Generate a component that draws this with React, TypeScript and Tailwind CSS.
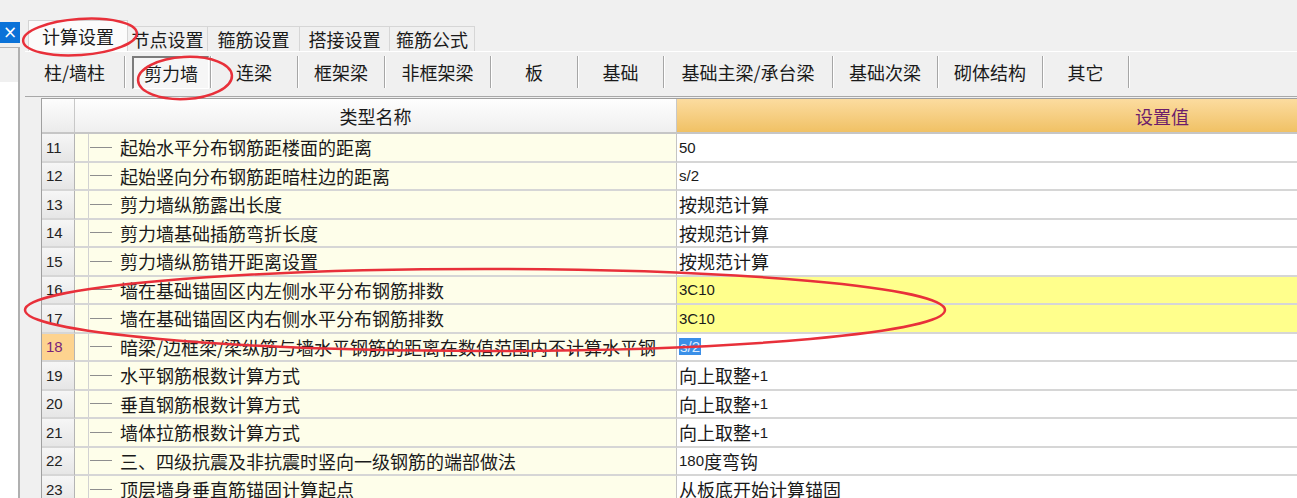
import React from "react";

type Row = { n: number; name: string; value: string; kind?: "yellow" | "selected" };

const rows: Row[] = [
  { n: 11, name: "起始水平分布钢筋距楼面的距离", value: "50" },
  { n: 12, name: "起始竖向分布钢筋距暗柱边的距离", value: "s/2" },
  { n: 13, name: "剪力墙纵筋露出长度", value: "按规范计算" },
  { n: 14, name: "剪力墙基础插筋弯折长度", value: "按规范计算" },
  { n: 15, name: "剪力墙纵筋错开距离设置", value: "按规范计算" },
  { n: 16, name: "墙在基础锚固区内左侧水平分布钢筋排数", value: "3C10", kind: "yellow" },
  { n: 17, name: "墙在基础锚固区内右侧水平分布钢筋排数", value: "3C10", kind: "yellow" },
  { n: 18, name: "暗梁/边框梁/梁纵筋与墙水平钢筋的距离在数值范围内不计算水平钢", value: "s/2", kind: "selected" },
  { n: 19, name: "水平钢筋根数计算方式", value: "向上取整+1" },
  { n: 20, name: "垂直钢筋根数计算方式", value: "向上取整+1" },
  { n: 21, name: "墙体拉筋根数计算方式", value: "向上取整+1" },
  { n: 22, name: "三、四级抗震及非抗震时竖向一级钢筋的端部做法", value: "180度弯钩" },
  { n: 23, name: "顶层墙身垂直筋锚固计算起点", value: "从板底开始计算锚固" },
];

const topTabs = [
  { label: "节点设置", w: "w-[80px]" },
  { label: "箍筋设置", w: "w-[92px]" },
  { label: "搭接设置", w: "w-[90px]" },
  { label: "箍筋公式", w: "w-[85px]" },
];

const subTabs = [
  { label: "柱/墙柱", w: "w-[100px]" },
  { label: "剪力墙", w: "w-[86px]", pressed: true },
  { label: "连梁", w: "w-[87px]" },
  { label: "框架梁", w: "w-[87px]" },
  { label: "非框架梁", w: "w-[106px]" },
  { label: "板", w: "w-[87px]" },
  { label: "基础", w: "w-[86px]" },
  { label: "基础主梁/承台梁", w: "w-[169px]" },
  { label: "基础次梁", w: "w-[105px]" },
  { label: "砌体结构", w: "w-[105px]" },
  { label: "其它", w: "w-[86px]" },
];

function Mixed({ text }: { text: string }) {
  const parts = text.match(/[\x20-\x7e]+|[^\x20-\x7e]+/g) || [];
  return (
    <>
      {parts.map((p, i) =>
        /^[\x20-\x7e]+$/.test(p) ? (
          <span key={i} className="font-['Liberation_Sans',sans-serif] text-[15px]">
            {p}
          </span>
        ) : (
          <span key={i} className="text-[18px]">
            {p}
          </span>
        )
      )}
    </>
  );
}

export default function App() {
  return (
    <div className="relative w-[1297px] h-[498px] overflow-hidden bg-[#f0f0f0] text-[#1a1a1a] font-['Noto_Sans_CJK_SC','Noto_Sans',sans-serif]">
      <div className="flex h-full">
        {/* left sidebar */}
        <div className="w-[20px] shrink-0 flex flex-col">
          <div className="h-[22px]" />
          <div className="h-[21px] bg-[#0a72d8] flex items-center justify-center text-white text-[17px] leading-none font-['DejaVu_Sans',sans-serif]">
            ×
          </div>
          <div className="h-[4px]" />
          <div className="h-[35px] border-t border-[#b4b4b4] border-r-2 border-r-[#b0b0b0]" />
          <div className="flex-1 bg-white border-r-2 border-[#b0b0b0]" />
        </div>

        {/* main */}
        <div className="flex-1 min-w-0 flex flex-col pt-[20px]">
          {/* top tabs */}
          <div className="flex items-end h-[31px] ml-[8px]">
            <div className="w-[100px] h-[31px] bg-[#fbfbfb] border border-b-0 border-[#d4d4d4] flex items-center justify-center text-[18px] leading-none pb-[1px]">
              计算设置
            </div>
            {topTabs.map((t) => (
              <div
                key={t.label}
                className={`${t.w} h-[25px] border-t border-r border-[#d6d6d6] bg-[#f0f0f0] flex items-center justify-center text-[18px] leading-none pb-[1px]`}
              >
                {t.label}
              </div>
            ))}
          </div>

          {/* tab page */}
          <div className="flex-1 flex flex-col min-h-0">
            {/* sub tabs */}
            <div className="h-[46px] ml-[5px] border-t border-white border-b border-b-[#a8a8a8] pt-[4px] flex items-start">
              {subTabs.map((s) => (
                <div
                  key={s.label}
                  className={`${s.w} h-[32px] shrink-0 flex items-center border-r border-[#a6a6a6] shadow-[1px_0_0_#ffffff] text-[18px] leading-none`}
                >
                  {s.pressed ? (
                    <div className="ml-[7px] w-[77px] h-[33px] border-l-2 border-t-2 border-[#7c7c7c] border-r border-b border-r-white border-b-white bg-[#f6f6f6] flex items-center justify-center">
                      {s.label}
                    </div>
                  ) : (
                    <div className="w-full text-center">{s.label}</div>
                  )}
                </div>
              ))}
            </div>

            {/* table */}
            <div className="mt-[1px] ml-[21px] flex-1 overflow-hidden border-l border-t border-[#a0a0a0] bg-white">
              <div className="w-[1610px]">
                {/* header */}
                <div className="flex h-[35px] border-b-2 border-[#c6c6c6]">
                  <div className="w-[33px] shrink-0 border-r border-[#c8c8c8] bg-gradient-to-b from-[#fdfdfd] to-[#ebebeb]" />
                  <div className="w-[602px] shrink-0 border-r border-[#c8c8c8] bg-gradient-to-b from-[#fefefe] to-[#efefef] flex items-center justify-center text-[18px] leading-none">
                    类型名称
                  </div>
                  <div className="w-[970px] shrink-0 bg-gradient-to-b from-[#fcdc9f] to-[#f0c164] flex items-center justify-center text-[18px] leading-none text-[#6b1d6b]">
                    设置值
                  </div>
                </div>

                {rows.map((r) => (
                  <div key={r.n} className="flex h-[28.5px]">
                    <div
                      className={`w-[33px] shrink-0 border-r border-b-2 border-r-[#b4b4b4] border-b-[#d6d6d6] flex items-center pl-[4px] font-['Liberation_Sans',sans-serif] text-[15px] leading-none ${
                        r.kind === "selected"
                          ? "bg-[#fdd38f] text-[#7a1f7a]"
                          : "bg-gradient-to-b from-[#f6f6f6] to-[#e6e6e6] text-[#222222]"
                      }`}
                    >
                      {r.n}
                    </div>
                    <div className="w-[602px] shrink-0 border-r border-r-[#c4c4c4] border-b-2 border-b-[#d6d6d6] bg-[#fefeea] flex items-stretch overflow-hidden">
                      <div className="w-[13px] shrink-0" />
                      <div className="w-px shrink-0 bg-[#d2d2d2]" />
                      <div className="flex items-center">
                        <div className="ml-[1px] w-[22px] h-px bg-[#8e8e8e]" />
                      </div>
                      <div className="ml-[8px] flex items-center whitespace-nowrap text-[18px] leading-none">
                        {r.name}
                      </div>
                    </div>
                    <div
                      className={`w-[970px] shrink-0 border-b-2 border-b-[#d6d6d6] flex items-center pl-[2px] whitespace-nowrap leading-none ${
                        r.kind === "yellow" ? "bg-[#ffff8c]" : "bg-white"
                      }`}
                    >
                      {r.kind === "selected" ? (
                        <span className="bg-[#3a8fe8] text-[#dcebff] px-[1px] font-['Liberation_Sans',sans-serif] text-[15px] leading-[17px]">
                          {r.value}
                        </span>
                      ) : (
                        <Mixed text={r.value} />
                      )}
                    </div>
                  </div>
                ))}
              </div>
            </div>
          </div>
        </div>
      </div>

      {/* red annotations */}
      <svg
        className="absolute left-0 top-0 pointer-events-none"
        width="1297"
        height="498"
        viewBox="0 0 1297 498"
      >
        <g fill="none" stroke="#e8303a" strokeWidth="2.5">
          <ellipse cx="80" cy="37" rx="57" ry="18" transform="rotate(-4 80 37)" />
          <ellipse cx="185" cy="78" rx="47" ry="21" transform="rotate(-3 185 78)" />
          <ellipse cx="485" cy="310" rx="460" ry="41" />
        </g>
      </svg>
    </div>
  );
}
